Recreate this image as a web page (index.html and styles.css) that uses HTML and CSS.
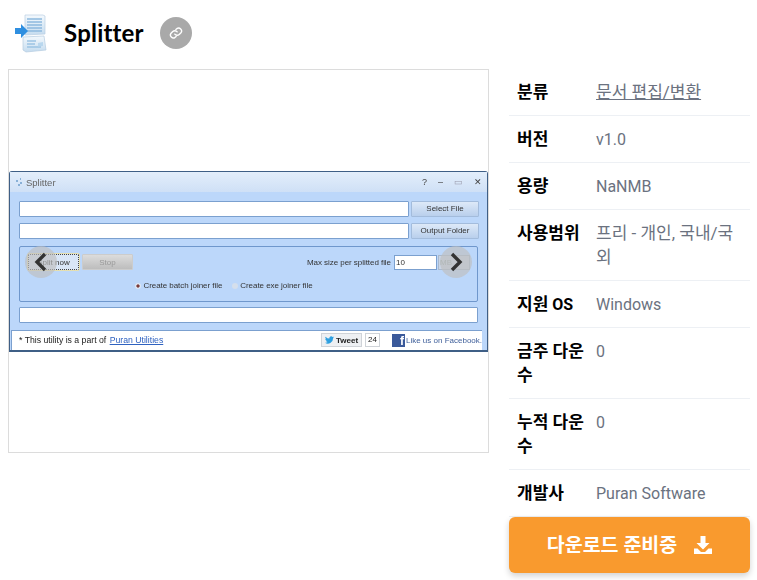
FILE: index.html
```html
<!DOCTYPE html>
<html lang="ko">
<head>
<meta charset="utf-8">
<title>Splitter</title>
<link rel="stylesheet" href="styles.css">
</head>
<body>
<header class="head">
  <svg class="app-icon" width="34" height="40" viewBox="0 0 34 40">
    <defs>
      <linearGradient id="pg" x1="0" y1="0" x2="0" y2="1"><stop offset="0" stop-color="#f4f9fd"/><stop offset="1" stop-color="#c5dcef"/></linearGradient>
    </defs>
    <path d="M11 1h18l2 1v18l-20 1z" fill="url(#pg)" stroke="#b9cfe2" stroke-width=".7"/>
    <path d="M13 5h15M13 8h15M13 11h15M13 14h15M13 17h15" stroke="#8db9de" stroke-width="1.3"/>
    <path d="M9 23l21-1 2 14-20 2-3-2z" fill="url(#pg)" stroke="#b4cbdf" stroke-width=".7"/>
    <path d="M13 27h9M13 30h8M13 33h14" stroke="#9cc3e3" stroke-width="1.3"/>
    <path d="M24 29l5-1v4l-5 .5z" fill="#b9d7ee"/>
    <path d="M1 14h6v-4l7 7-7 7v-4H1z" fill="#2f8fe0"/>
  </svg>
  <h1 class="title">Splitter</h1>
  <a class="link-btn" href="#" aria-label="링크">
    <svg width="14" height="14" viewBox="0 0 24 24" fill="none" stroke="#fff" stroke-width="2.400" stroke-linecap="round" stroke-linejoin="round">
      <path d="M10 14a5 5 0 0 0 7.5.5l3-3a5 5 0 0 0-7-7l-1.7 1.7"/>
      <path d="M14 10a5 5 0 0 0-7.5-.5l-3 3a5 5 0 0 0 7 7l1.7-1.7"/>
    </svg>
  </a>
</header>

<main class="layout">
  <section class="gallery">
    <div class="shot-wrap">
      <div class="shot">
        <div class="win-bar">
          <span class="win-title"><svg width="8" height="8" viewBox="0 0 8 8"><path d="M1 3h2M5 1h1M5 5h2M3 7h2" stroke="#6f9fcb" stroke-width="1.300"/></svg>Splitter</span>
          <span class="win-ctrl"><b>?</b><b>–</b><b class="dim">▭</b><b>✕</b></span>
        </div>
        <div class="win-body">
          <div class="file-row"><div class="field"></div><div class="btn">Select File</div></div>
          <div class="file-row"><div class="field"></div><div class="btn">Output Folder</div></div>
          <div class="group">
            <div class="group-top">
              <div class="group-btns"><span class="btn small focus">Split now</span><span class="btn small off">Stop</span></div>
              <div class="size"><span>Max size per splitted file</span><span class="size-in">10</span><span class="unit">MB</span></div>
            </div>
            <div class="radios">
              <span><i class="radio on"></i>Create batch joiner file</span>
              <span><i class="radio"></i>Create exe joiner file</span>
            </div>
          </div>
          <div class="field wide"></div>
        </div>
        <div class="win-foot">
          <span class="foot-l">* This utility is a part of <u>Puran Utilities</u></span>
          <span class="foot-r">
            <span class="tweet"><svg width="9" height="8" viewBox="0 0 24 20"><path d="M24 2.4a10 10 0 0 1-2.8.8A5 5 0 0 0 23.300 .5a10 10 0 0 1-3.100 1.200 4.900 4.900 0 0 0-8.400 4.500A14 14 0 0 1 1.700 1a4.900 4.900 0 0 0 1.500 6.600 5 5 0 0 1-2.200-.6c0 2.400 1.700 4.400 4 4.900a5 5 0 0 1-2.200.1 4.900 4.900 0 0 0 4.600 3.400A10 10 0 0 1 0 17.500 14 14 0 0 0 21.500 5.600 10 10 0 0 0 24 2.400z" fill="#2d9fe0"/></svg>Tweet</span>
            <span class="count">24</span>
            <span class="fb">f</span>
            <span class="fb-text">Like us on Facebook.</span>
          </span>
        </div>
      </div>
      <button class="nav prev" aria-label="이전"><svg width="14" height="20" viewBox="0 0 14 20"><path d="M11 2L3 10l8 8" fill="none" stroke="#333" stroke-width="3.400"/></svg></button>
      <button class="nav next" aria-label="다음"><svg width="14" height="20" viewBox="0 0 14 20"><path d="M3 2l8 8-8 8" fill="none" stroke="#333" stroke-width="3.400"/></svg></button>
    </div>
  </section>

  <aside class="side">
    <dl class="info">
      <div class="row"><dt><span class="ko">분류</span></dt><dd><a href="#"><span class="ko">문서 편집/변환</span></a></dd></div>
      <div class="row"><dt><span class="ko">버전</span></dt><dd>v1.0</dd></div>
      <div class="row"><dt><span class="ko">용량</span></dt><dd>NaNMB</dd></div>
      <div class="row"><dt><span class="ko">사용범위</span></dt><dd><span class="ko">프리 - 개인, 국내/국외</span></dd></div>
      <div class="row"><dt><span class="ko">지원</span> OS</dt><dd>Windows</dd></div>
      <div class="row"><dt><span class="ko">금주 다운수</span></dt><dd>0</dd></div>
      <div class="row"><dt><span class="ko">누적 다운수</span></dt><dd>0</dd></div>
      <div class="row"><dt><span class="ko">개발사</span></dt><dd>Puran Software</dd></div>
    </dl>
    <a class="download" href="#"><span class="download-label">다운로드 준비중</span>
      <svg width="18" height="18" viewBox="0 0 18 18"><path d="M6.500 0h5v7h4L9 13.500 2.500 7h4z" fill="#fff"/><path d="M0 12.500h3.500L7 16h4l3.500-3.500H18V18H0z" fill="#fff"/></svg>
    </a>
  </aside>
</main>
</body>
</html>
```
FILE: styles.css
```css
* { box-sizing: border-box; }
html, body { height: 100%; }
body {
  margin: 0;
  height: 580px;
  overflow: hidden;
  background: #fff;
  color: #000;
  font-family: Roboto, "Noto Sans CJK KR", sans-serif;
}
.head {
  display: flex;
  align-items: center;
  height: 69px;
  padding: 0 0 3px 14px;
}
.app-icon { margin-top: 1px; }
.title {
  margin: 0 0 0 16px;
  font-family: Lato, sans-serif;
  font-size: 24px;
  font-weight: 700;
  letter-spacing: .2px;
  line-height: 32px;
}
.link-btn {
  display: flex;
  align-items: center;
  justify-content: center;
  width: 32px;
  height: 32px;
  margin-left: 16px;
  border-radius: 50%;
  background: #a9a9a9;
}
.layout {
  display: flex;
  align-items: flex-start;
  padding-left: 8px;
}
.gallery {
  display: flex;
  align-items: center;
  width: 481px;
  height: 384px;
  border: 1px solid #dcdcdc;
}
.shot-wrap { position: relative; width: 100%; }
.shot {
  height: 181px;
  display: flex;
  flex-direction: column;
  border: 1px solid #3f5f86;
  border-bottom-width: 2px;
  border-radius: 3px 3px 0 0;
  background: #bcd7fa;
  font-family: "Liberation Sans", sans-serif;
  font-size: 8px;
  color: #333;
  filter: blur(.4px);
}
.win-bar {
  display: flex;
  justify-content: space-between;
  align-items: center;
  height: 20px;
  padding: 1px 5px 0 5px;
  background: linear-gradient(#e3eefb, #cfe0f6);
  font-size: 9.500px;
  color: #666;
}
.win-title { display: flex; align-items: center; gap: 3px; }
.win-ctrl { display: flex; gap: 11px; font-size: 9px; color: #444; }
.win-ctrl b { font-weight: 400; }
.win-ctrl .dim { color: #99a; }
.win-body {
  flex: 1;
  padding: 9px 8px 0 9px;
  display: flex;
  flex-direction: column;
  gap: 6px;
}
.file-row { display: flex; gap: 2px; flex: 0 0 16px; }
.field {
  flex: 1;
  background: #fff;
  border: 1px solid #7ba0cf;
  border-radius: 1px;
}
.field.wide { flex: 0 0 16px; margin: -1px 1px 0 0; }
.btn {
  width: 68px;
  display: flex;
  align-items: center;
  justify-content: center;
  background: linear-gradient(#dde9f8, #b9cfec);
  border: 1px solid #a3bcdc;
  border-radius: 1px;
  color: #333;
}
.group {
  flex: 0 0 56px;
  margin: 1px 1px 0 0;
  border: 1px solid #6f97cc;
  border-radius: 2px;
  padding: 7px 7px 0 8px;
}
.group-top {
  display: flex;
  justify-content: space-between;
  align-items: center;
  height: 17px;
}
.group-btns { display: flex; gap: 3px; }
.btn.small { width: 51px; height: 16px; }
.btn.focus { background: #d9e6f7; border: 1px dotted #444; outline: 1px solid #e5dfb0; }
.btn.off { background: linear-gradient(#dcdcdc, #bdbdbd); color: #999; border-color: #ccc; }
.size { display: flex; align-items: center; gap: 2px; }
.size > span:first-child { margin-right: 1px; letter-spacing: -.05px; }
.size-in {
  width: 43px;
  height: 15px;
  background: #fff;
  border: 1px solid #7ba0cf;
  padding-left: 1px;
  line-height: 13px;
}
.unit {
  width: 32px;
  height: 15px;
  margin-left: -1px;
  background: #c9d5e6;
  border: 1px solid #aab9cd;
  color: #9aa;
  line-height: 13px;
  padding-left: 1px;
}
.radios {
  display: flex;
  justify-content: center;
  gap: 10px;
  margin-top: 9px;
  padding-right: 50px;
  line-height: 12px;
}
.radios span { display: flex; align-items: center; letter-spacing: -.05px; }
.radio {
  width: 6px;
  height: 6px;
  margin-right: 2px;
  border-radius: 50%;
  background: #d5dfec;
}
.radio.on { background: radial-gradient(#7a3a3a 35%, #dde6f2 40%); }
.win-foot {
  display: flex;
  justify-content: space-between;
  align-items: center;
  height: 20px;
  margin: 0 5px 0 1px;
  padding: 0 0 0 7px;
  background: #fff;
  border: 1px solid #7ba0cf;
  border-width: 1px 0 0 1px;
  color: #222;
  font-size: 8.700px;
}
.foot-l u { color: #2f62c0; margin-left: 1px; }
.foot-r { display: flex; align-items: center; font-size: 8px; }
.tweet {
  display: flex;
  align-items: center;
  gap: 2px;
  height: 14px;
  padding: 0 3px;
  background: #eef0f3;
  border: 1px solid #cfd3d8;
  font-weight: 700;
}
.count {
  height: 14px;
  margin-left: 3px;
  padding: 0 2px;
  border: 1px solid #cfd3d8;
  line-height: 12px;
}
.fb {
  width: 13px;
  height: 13px;
  margin-left: 12px;
  background: #3b5a9a;
  color: #fff;
  font-size: 12px;
  font-weight: 700;
  text-align: right;
  line-height: 14px;
  padding-right: 1px;
}
.fb-text { margin-left: 1px; color: #3f5f9a; white-space: nowrap; }
.nav {
  position: absolute;
  top: 75px;
  width: 32px;
  height: 32px;
  padding: 0;
  display: flex;
  align-items: center;
  justify-content: center;
  border: 0;
  border-radius: 50%;
  background: rgba(190, 190, 190, .65);
}
.prev { left: 16px; }
.next { right: 16px; }
.side {
  position: relative;
  width: 241px;
  margin-left: 20px;
}
.info { margin: 0; height: 448px; overflow: hidden; }
.row {
  display: flex;
  padding: 12px 0 10px;
  border-bottom: 1px solid #edf0f4;
  font-size: 16px;
  line-height: 24px;
}
.ko { font-size: 17px; line-height: 1; }
.row dt {
  flex: 0 0 87px;
  padding: 0 8px;
  font-weight: 700;
}
.row dd {
  flex: 1;
  margin: 0;
  padding-right: 8px;
  color: #6b7280;
}
.row dd a { color: #6b7280; }
.download {
  display: flex;
  align-items: center;
  justify-content: center;
  gap: 17px;
  height: 56px;
  border-radius: 6px;
  background: #f99a2e;
  color: #fff;
  font-size: 19.500px;
  font-weight: 700;
  text-decoration: none;
  box-shadow: 0 3px 6px rgba(0, 0, 0, .18);
}
.download-label { margin-bottom: 3px; }
```
